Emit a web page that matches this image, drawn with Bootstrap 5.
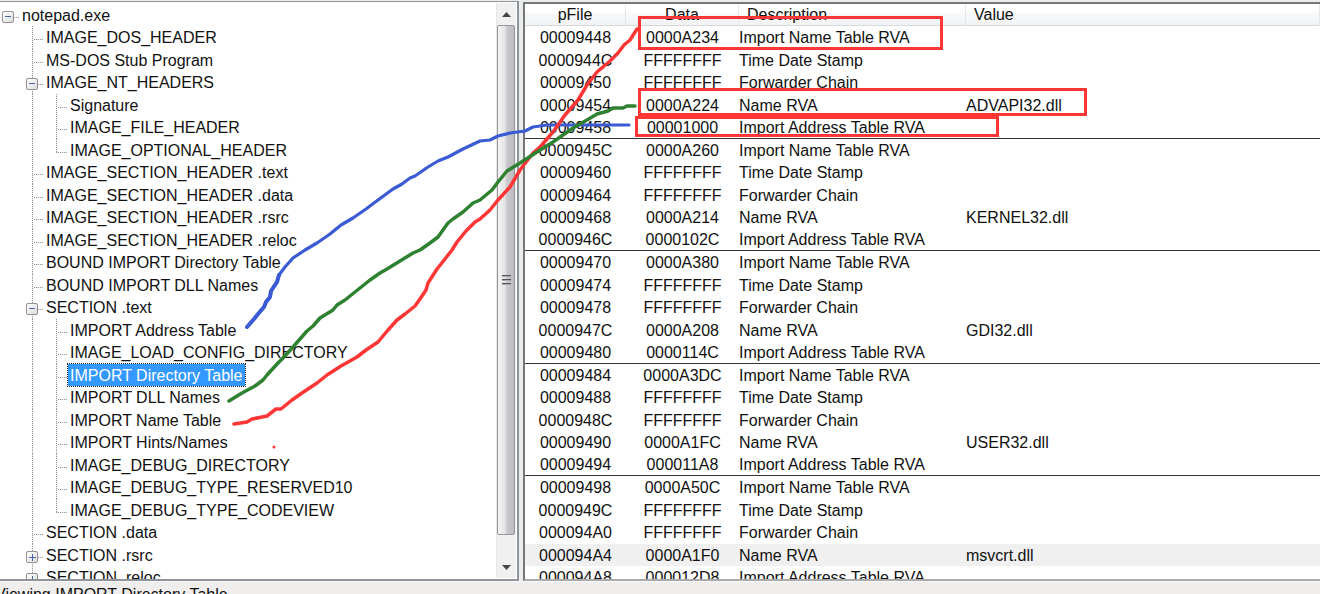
<!DOCTYPE html>
<html lang="en">
<head>
<meta charset="utf-8">
<meta name="viewport" content="width=device-width, initial-scale=1">
<title>notepad.exe - IMPORT Directory Table</title>
<link href="https://cdn.jsdelivr.net/npm/bootstrap@5.3.0/dist/css/bootstrap.min.css" rel="stylesheet">
<style>
  body { font: 16px/22px "Liberation Sans", Arial, sans-serif; color: #111; background: #e9eded; }
  .tree-pane { width: 519px; border: solid #8f949b; border-width: 1px 2px 2px 0; margin-top: 1px; }
  .list-pane { border-style: solid; border-color: #777 #777 #aaa; border-width: 2px 0 2px 2px; margin: 2px 0 0 4px; }

  /* Tree rows: guide cells followed by a label */
  .tree-list { padding-top: 2px; }
  .tree-row { height: 22px; white-space: nowrap; }
  .tree-row:nth-child(even) { height: 23px; }
  .guide { flex: none; width: 24px; padding: 0 0 0 2px; }
  .guide:last-of-type { width: 22px; }
  .trunk { background: repeating-linear-gradient(#999 0 1px, #eee 1px 2px) 8px 0 / 1px 100% no-repeat; }
  .tee { background: repeating-linear-gradient(#999 0 1px, #eee 1px 2px) 8px 0 / 1px 100% no-repeat,
                     repeating-linear-gradient(90deg, #999 0 1px, #eee 1px 2px) 8px 13px / 11px 1px no-repeat; }
  .elbow { background: repeating-linear-gradient(#999 0 1px, #eee 1px 2px) 8px 0 / 1px 13px no-repeat,
                       repeating-linear-gradient(90deg, #999 0 1px, #eee 1px 2px) 8px 13px / 11px 1px no-repeat; }
  .stub { background: repeating-linear-gradient(90deg, #999 0 1px, #eee 1px 2px) 8px 13px / 11px 1px no-repeat; }
  .twist { display: block; width: 12px; height: 12px; margin-top: 7px; padding: 0; border: 1px solid #919191; border-radius: 2px;
           background: linear-gradient(#4a63ad, #4a63ad) 2px 4px / 6px 1px no-repeat, linear-gradient(135deg, #fff, #dcdcdc); }
  .twist.closed { background: linear-gradient(#4a63ad, #4a63ad) 2px 5px / 7px 1px no-repeat,
                  linear-gradient(#4a63ad, #4a63ad) 5px 2px / 1px 7px no-repeat, linear-gradient(135deg, #fff, #dcdcdc); }
  .tree-label { color: inherit; text-decoration: none; line-height: 24px; }
  .tree-label.chosen { background: #3399ff; color: #fff; outline: 1px dotted #222; margin: 0 0 0 -2px; padding: 0 2px; }

  .scroller { width: 20px; background: #f0f0f0; border-left: 1px solid #e6e6e6; margin: 1px 1px 1px 0; }
  .scroller button { height: 22px; padding: 0; border: 0; background: none; }
  .scroller .thumb { flex: 509 1 0; width: 18px; border: 1px solid #979797; border-radius: 2px;
                     background: linear-gradient(90deg, #f4f4f4, #e3e3e4 45%, #c9c9cd 55%, #bcbcc0); }
  .scroll-rest { flex: 21 1 0; }

  .dump { table-layout: fixed; width: 100%; border-collapse: separate; border-spacing: 0; }
  .dump th { height: 22px; padding: 1px 0 0 8px; font-weight: 400; line-height: 20px; border-bottom: 1px solid #d9dadb; border-right: 1px solid #e4e7ea;
             background: linear-gradient(#fff 0 8px, #f7f8fa 9px, #f1f2f4 100%); }
  .dump th.text-center { padding: 1px 0 0; }
  .dump td { padding: 1px 0 0; height: 22px; line-height: 20px; white-space: nowrap; }
  .dump tbody tr:nth-child(odd) td { height: 23px; }
  .dump tbody tr:nth-child(5n) td { border-bottom: 1px solid #333; }
  .dump tr.current td { background: #f0f0f0; }
  .col-a { width: 101px; } .col-b { width: 113px; } .col-c { width: 227px; }

  .status { height: 13px; border-top: 1px solid #f8f8f8; background: #f0eded; line-height: 26px; text-indent: -5px; white-space: nowrap; }
  .ink { pointer-events: none; fill: none; stroke-linecap: round; stroke-linejoin: round; }
</style>
</head>
<body class="vh-100 overflow-hidden position-relative d-flex flex-column">

<main class="d-flex flex-grow-1 overflow-hidden">
  <section class="tree-pane d-flex flex-shrink-0 bg-white overflow-hidden" aria-label="File structure">
    <ul class="tree-list list-unstyled flex-grow-1 mb-0 overflow-hidden">
      <li class="tree-row d-flex"><span class="guide stub"><button class="twist" aria-label="Collapse"></button></span><a class="tree-label" href="#">notepad.exe</a></li>
      <li class="tree-row d-flex"><span class="guide"></span><span class="guide tee"></span><a class="tree-label" href="#">IMAGE_DOS_HEADER</a></li>
      <li class="tree-row d-flex"><span class="guide"></span><span class="guide tee"></span><a class="tree-label" href="#">MS-DOS Stub Program</a></li>
      <li class="tree-row d-flex"><span class="guide"></span><span class="guide tee"><button class="twist" aria-label="Collapse"></button></span><a class="tree-label" href="#">IMAGE_NT_HEADERS</a></li>
      <li class="tree-row d-flex"><span class="guide"></span><span class="guide trunk"></span><span class="guide tee"></span><a class="tree-label" href="#">Signature</a></li>
      <li class="tree-row d-flex"><span class="guide"></span><span class="guide trunk"></span><span class="guide tee"></span><a class="tree-label" href="#">IMAGE_FILE_HEADER</a></li>
      <li class="tree-row d-flex"><span class="guide"></span><span class="guide trunk"></span><span class="guide elbow"></span><a class="tree-label" href="#">IMAGE_OPTIONAL_HEADER</a></li>
      <li class="tree-row d-flex"><span class="guide"></span><span class="guide tee"></span><a class="tree-label" href="#">IMAGE_SECTION_HEADER .text</a></li>
      <li class="tree-row d-flex"><span class="guide"></span><span class="guide tee"></span><a class="tree-label" href="#">IMAGE_SECTION_HEADER .data</a></li>
      <li class="tree-row d-flex"><span class="guide"></span><span class="guide tee"></span><a class="tree-label" href="#">IMAGE_SECTION_HEADER .rsrc</a></li>
      <li class="tree-row d-flex"><span class="guide"></span><span class="guide tee"></span><a class="tree-label" href="#">IMAGE_SECTION_HEADER .reloc</a></li>
      <li class="tree-row d-flex"><span class="guide"></span><span class="guide tee"></span><a class="tree-label" href="#">BOUND IMPORT Directory Table</a></li>
      <li class="tree-row d-flex"><span class="guide"></span><span class="guide tee"></span><a class="tree-label" href="#">BOUND IMPORT DLL Names</a></li>
      <li class="tree-row d-flex"><span class="guide"></span><span class="guide tee"><button class="twist" aria-label="Collapse"></button></span><a class="tree-label" href="#">SECTION .text</a></li>
      <li class="tree-row d-flex"><span class="guide"></span><span class="guide trunk"></span><span class="guide tee"></span><a class="tree-label" href="#">IMPORT Address Table</a></li>
      <li class="tree-row d-flex"><span class="guide"></span><span class="guide trunk"></span><span class="guide tee"></span><a class="tree-label" href="#">IMAGE_LOAD_CONFIG_DIRECTORY</a></li>
      <li class="tree-row d-flex"><span class="guide"></span><span class="guide trunk"></span><span class="guide tee"></span><a class="tree-label chosen" href="#">IMPORT Directory Table</a></li>
      <li class="tree-row d-flex"><span class="guide"></span><span class="guide trunk"></span><span class="guide tee"></span><a class="tree-label" href="#">IMPORT DLL Names</a></li>
      <li class="tree-row d-flex"><span class="guide"></span><span class="guide trunk"></span><span class="guide tee"></span><a class="tree-label" href="#">IMPORT Name Table</a></li>
      <li class="tree-row d-flex"><span class="guide"></span><span class="guide trunk"></span><span class="guide tee"></span><a class="tree-label" href="#">IMPORT Hints/Names</a></li>
      <li class="tree-row d-flex"><span class="guide"></span><span class="guide trunk"></span><span class="guide tee"></span><a class="tree-label" href="#">IMAGE_DEBUG_DIRECTORY</a></li>
      <li class="tree-row d-flex"><span class="guide"></span><span class="guide trunk"></span><span class="guide tee"></span><a class="tree-label" href="#">IMAGE_DEBUG_TYPE_RESERVED10</a></li>
      <li class="tree-row d-flex"><span class="guide"></span><span class="guide trunk"></span><span class="guide elbow"></span><a class="tree-label" href="#">IMAGE_DEBUG_TYPE_CODEVIEW</a></li>
      <li class="tree-row d-flex"><span class="guide"></span><span class="guide tee"></span><a class="tree-label" href="#">SECTION .data</a></li>
      <li class="tree-row d-flex"><span class="guide"></span><span class="guide tee"><button class="twist closed" aria-label="Expand"></button></span><a class="tree-label" href="#">SECTION .rsrc</a></li>
      <li class="tree-row d-flex"><span class="guide"></span><span class="guide elbow"><button class="twist closed" aria-label="Expand"></button></span><a class="tree-label" href="#">SECTION .reloc</a></li>
    </ul>
    <div class="scroller d-flex flex-column flex-shrink-0">
      <button class="d-flex align-items-center justify-content-center" aria-label="Scroll up"><svg width="9" height="5"><path d="M4.5 0 9 5H0z" fill="#444"/></svg></button>
      <button class="thumb d-flex align-items-center justify-content-center" aria-label="Scroll position"><svg width="9" height="12"><path d="M0 1.500h9M0 5.500h9M0 9.500h9" stroke="#555"/><path d="M0 2.500h9M0 6.500h9M0 10.500h9" stroke="#aaa"/></svg></button>
      <div class="scroll-rest"></div>
      <button class="d-flex align-items-center justify-content-center" aria-label="Scroll down"><svg width="9" height="5"><path d="M0 0h9L4.500 5z" fill="#444"/></svg></button>
    </div>
  </section>

  <section class="list-pane flex-grow-1 bg-white overflow-hidden" aria-label="Values">
    <table class="dump">
      <colgroup><col class="col-a"><col class="col-b"><col class="col-c"><col></colgroup>
      <thead><tr><th class="text-center">pFile</th><th class="text-center">Data</th><th>Description</th><th>Value</th></tr></thead>
      <tbody>
        <tr><td class="text-center">00009448</td><td class="text-center">0000A234</td><td>Import Name Table RVA</td><td></td></tr>
        <tr><td class="text-center">0000944C</td><td class="text-center">FFFFFFFF</td><td>Time Date Stamp</td><td></td></tr>
        <tr><td class="text-center">00009450</td><td class="text-center">FFFFFFFF</td><td>Forwarder Chain</td><td></td></tr>
        <tr><td class="text-center">00009454</td><td class="text-center">0000A224</td><td>Name RVA</td><td>ADVAPI32.dll</td></tr>
        <tr><td class="text-center">00009458</td><td class="text-center">00001000</td><td>Import Address Table RVA</td><td></td></tr>
        <tr><td class="text-center">0000945C</td><td class="text-center">0000A260</td><td>Import Name Table RVA</td><td></td></tr>
        <tr><td class="text-center">00009460</td><td class="text-center">FFFFFFFF</td><td>Time Date Stamp</td><td></td></tr>
        <tr><td class="text-center">00009464</td><td class="text-center">FFFFFFFF</td><td>Forwarder Chain</td><td></td></tr>
        <tr><td class="text-center">00009468</td><td class="text-center">0000A214</td><td>Name RVA</td><td>KERNEL32.dll</td></tr>
        <tr><td class="text-center">0000946C</td><td class="text-center">0000102C</td><td>Import Address Table RVA</td><td></td></tr>
        <tr><td class="text-center">00009470</td><td class="text-center">0000A380</td><td>Import Name Table RVA</td><td></td></tr>
        <tr><td class="text-center">00009474</td><td class="text-center">FFFFFFFF</td><td>Time Date Stamp</td><td></td></tr>
        <tr><td class="text-center">00009478</td><td class="text-center">FFFFFFFF</td><td>Forwarder Chain</td><td></td></tr>
        <tr><td class="text-center">0000947C</td><td class="text-center">0000A208</td><td>Name RVA</td><td>GDI32.dll</td></tr>
        <tr><td class="text-center">00009480</td><td class="text-center">0000114C</td><td>Import Address Table RVA</td><td></td></tr>
        <tr><td class="text-center">00009484</td><td class="text-center">0000A3DC</td><td>Import Name Table RVA</td><td></td></tr>
        <tr><td class="text-center">00009488</td><td class="text-center">FFFFFFFF</td><td>Time Date Stamp</td><td></td></tr>
        <tr><td class="text-center">0000948C</td><td class="text-center">FFFFFFFF</td><td>Forwarder Chain</td><td></td></tr>
        <tr><td class="text-center">00009490</td><td class="text-center">0000A1FC</td><td>Name RVA</td><td>USER32.dll</td></tr>
        <tr><td class="text-center">00009494</td><td class="text-center">000011A8</td><td>Import Address Table RVA</td><td></td></tr>
        <tr><td class="text-center">00009498</td><td class="text-center">0000A50C</td><td>Import Name Table RVA</td><td></td></tr>
        <tr><td class="text-center">0000949C</td><td class="text-center">FFFFFFFF</td><td>Time Date Stamp</td><td></td></tr>
        <tr><td class="text-center">000094A0</td><td class="text-center">FFFFFFFF</td><td>Forwarder Chain</td><td></td></tr>
        <tr class="current"><td class="text-center">000094A4</td><td class="text-center">0000A1F0</td><td>Name RVA</td><td>msvcrt.dll</td></tr>
        <tr><td class="text-center">000094A8</td><td class="text-center">000012D8</td><td>Import Address Table RVA</td><td></td></tr>
      </tbody>
    </table>
  </section>
</main>

<footer class="status flex-shrink-0">Viewing IMPORT Directory Table</footer>

<!-- Hand-drawn links between tree entries and table rows -->
<svg class="ink position-absolute top-0 start-0 w-100 h-100" aria-hidden="true">
  <g stroke="#ff3636" stroke-width="3" stroke-linejoin="miter">
    <rect x="639.5" y="17.5" width="302" height="31"/>
    <rect x="639.5" y="89.5" width="446" height="25"/>
    <rect x="636.5" y="117.5" width="361" height="18"/>
  </g>
  <path stroke="#3a5bd4" stroke-width="3.2" d="M247 327 254 319 258 314 264 307 266 302 270 297 271 291 277 282 279 275 285 267 293 258 305 250 317 243 330 234 341 225 353 218 366 209 378 200 393 189 402 184 410 178 415 176 428 167 438 161 448 157 463 149 480 141 490 140 498 136 510 133 525 131 533 127 547 125 629 125"/>
  <path stroke="#3a5bd4" stroke-width="4" d="M247 327 254 319 258 314 264 307 266 302 270 297 271 291 277 282 279 275"/>
  <path stroke="#ff3636" stroke-width="3.5" d="M234 424 247 422 252 419 267 416 276 409 281 409 292 400 302 393 317 383 327 375 341 366 357 357 366 350 378 342 388 330 397 320 405 314 415 306 420 299 426 290 428 283 437 269 445 259 452 250 457 242 466 231 475 222 480 219 490 210 498 200 510 187 520 170 533 153 540 147 553 132 565 115 578 100 587 85 597 72 610 61 618 53 624 45 630 40 637 29"/>
  <path stroke="#2f8132" stroke-width="3.5" d="M229 401 242 393 255 386 263 380 267 375 278 363 283 358 293 347 307 331 313 326 320 318 333 310 337 305 345 300 360 288 370 280 380 273 387 269 400 261 413 253 420 250 430 243 438 237 448 223 453 219 463 212 473 203 480 200 492 190 498 182 507 171 520 163 537 152 553 142 573 128 587 120 597 114 608 111 613 108 623 108 627 106 635 106"/>
  <circle cx="274" cy="447" r="1.5" fill="#ff3636"/>
</svg>

<script src="https://cdn.jsdelivr.net/npm/bootstrap@5.3.0/dist/js/bootstrap.bundle.min.js"></script>
</body>
</html>
